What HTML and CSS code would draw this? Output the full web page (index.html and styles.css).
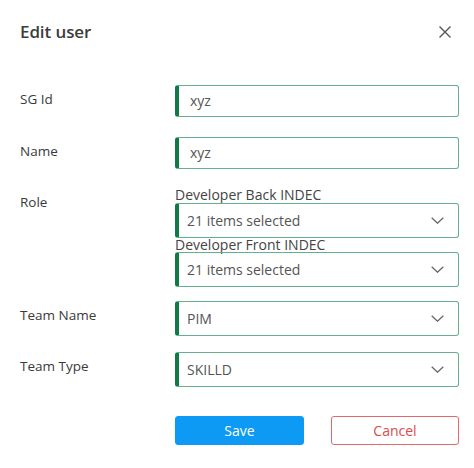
FILE: index.html
```html
<!DOCTYPE html>
<html>
<head>
<meta charset="utf-8">
<link rel="stylesheet" href="styles.css">
</head>
<body>
<div class="dialog">
  <div class="header">
    <h1 class="title">Edit user</h1>
    <button class="close" aria-label="Close">
      <svg width="12" height="12" viewBox="0 0 12 12"><path d="M0.5 0.5L11.5 11.5M11.5 0.5L0.5 11.5" stroke="#555" stroke-width="1.4" fill="none"/></svg>
    </button>
  </div>
  <div class="form">
    <div class="row r1">
      <div class="label">SG Id</div>
      <div class="field input"><span class="value">xyz</span></div>
    </div>
    <div class="row r2">
      <div class="label">Name</div>
      <div class="field input"><span class="value">xyz</span></div>
    </div>
    <div class="row r3">
      <div class="label role">Role</div>
      <div class="stack">
        <div class="sublabel first">Developer Back INDEC</div>
        <div class="field select"><span class="value">21 items selected</span><svg class="chev" width="13" height="7" viewBox="0 0 13 7"><path d="M0.7 0.7L6.5 6.2L12.3 0.7" stroke="#666" stroke-width="1.3" fill="none"/></svg></div>
        <div class="sublabel">Developer Front INDEC</div>
        <div class="field select"><span class="value">21 items selected</span><svg class="chev" width="13" height="7" viewBox="0 0 13 7"><path d="M0.7 0.7L6.5 6.2L12.3 0.7" stroke="#666" stroke-width="1.3" fill="none"/></svg></div>
      </div>
    </div>
    <div class="row r4">
      <div class="label tn">Team Name</div>
      <div class="field select"><span class="value">PIM</span><svg class="chev" width="13" height="7" viewBox="0 0 13 7"><path d="M0.7 0.7L6.5 6.2L12.3 0.7" stroke="#666" stroke-width="1.3" fill="none"/></svg></div>
    </div>
    <div class="row r5">
      <div class="label">Team Type</div>
      <div class="field select"><span class="value">SKILLD</span><svg class="chev" width="13" height="7" viewBox="0 0 13 7"><path d="M0.7 0.7L6.5 6.2L12.3 0.7" stroke="#666" stroke-width="1.3" fill="none"/></svg></div>
    </div>
    <div class="actions">
      <button class="btn save">Save</button>
      <button class="btn cancel">Cancel</button>
    </div>
  </div>
</div>
</body>
</html>
```

FILE: styles.css
```css
* { box-sizing: border-box; }
html, body { margin: 0; padding: 0; background: #fff; }
body { font-family: "Open Sans", "Noto Sans", sans-serif; color: #444; }
.dialog { width: 474px; height: 468px; padding: 0 15px 0 20px; }
.header { display: flex; align-items: center; justify-content: space-between; height: 63px; }
.title { margin: 0; font-size: 17px; font-weight: 600; color: #3c3c3c; letter-spacing: -0.1px; }
.close { background: none; border: 0; padding: 0; margin-right: 8px; width: 12px; height: 12px; display: flex; }
.form { display: flex; flex-direction: column; margin-top: 22px; }
.row { display: grid; grid-template-columns: 155px 284px; }
.r2 { margin-top: 20px; }
.r3 { margin-top: 18px; }
.r4 { margin-top: 14px; }
.r5 { margin-top: 16px; }
.label { font-family: "Open Sans", sans-serif; font-size: 13.5px; font-weight: 400; line-height: 20px; padding-top: 4px; color: #3a3a3a; }
.label.role { padding-top: 5px; }
.label.tn { padding-top: 4px; }
.field { border: 1px solid #62b08c; border-left: 4px solid #0f7a45; border-radius: 3px; display: flex; align-items: center; padding-left: 11px; padding-right: 14px; font-size: 14px; color: #555; }
.input { height: 32px; }
.select { height: 35px; justify-content: space-between; padding-left: 8px; }
.value { line-height: 20px; }
.stack { display: flex; flex-direction: column; }
.sublabel { font-size: 14px; line-height: 14px; height: 14px; color: #444; white-space: nowrap; }
.sublabel.first { height: 16px; line-height: 16px; }
.chev { display: block; }
.actions { display: grid; grid-template-columns: 129px 128px; column-gap: 27px; margin-left: 155px; margin-top: 29px; }
.btn { height: 29px; border-radius: 3px; font-family: "Open Sans", sans-serif; font-size: 14px; padding: 0; cursor: pointer; }
.save { background: #0d9af5; border: 1px solid #0d9af5; color: #fff; }
.cancel { background: #fff; border: 1px solid #e0696b; color: #dc4a4d; }
```
